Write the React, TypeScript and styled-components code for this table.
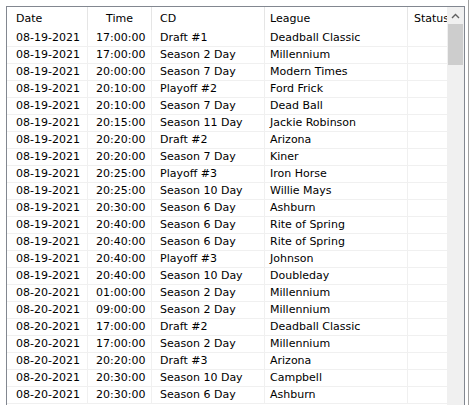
import styled, { createGlobalStyle } from "styled-components";

const GlobalStyle = createGlobalStyle`
  html, body {
    margin: 0;
    padding: 0;
    background: #ffffff;
    overflow: hidden;
  }
`;

type Row = [string, string, string, string];

const rows: Row[] = [
  ["08-19-2021", "17:00:00", "Draft #1", "Deadball Classic"],
  ["08-19-2021", "17:00:00", "Season 2 Day", "Millennium"],
  ["08-19-2021", "20:00:00", "Season 7 Day", "Modern Times"],
  ["08-19-2021", "20:10:00", "Playoff #2", "Ford Frick"],
  ["08-19-2021", "20:10:00", "Season 7 Day", "Dead Ball"],
  ["08-19-2021", "20:15:00", "Season 11 Day", "Jackie Robinson"],
  ["08-19-2021", "20:20:00", "Draft #2", "Arizona"],
  ["08-19-2021", "20:20:00", "Season 7 Day", "Kiner"],
  ["08-19-2021", "20:25:00", "Playoff #3", "Iron Horse"],
  ["08-19-2021", "20:25:00", "Season 10 Day", "Willie Mays"],
  ["08-19-2021", "20:30:00", "Season 6 Day", "Ashburn"],
  ["08-19-2021", "20:40:00", "Season 6 Day", "Rite of Spring"],
  ["08-19-2021", "20:40:00", "Season 6 Day", "Rite of Spring"],
  ["08-19-2021", "20:40:00", "Playoff #3", "Johnson"],
  ["08-19-2021", "20:40:00", "Season 10 Day", "Doubleday"],
  ["08-20-2021", "01:00:00", "Season 2 Day", "Millennium"],
  ["08-20-2021", "09:00:00", "Season 2 Day", "Millennium"],
  ["08-20-2021", "17:00:00", "Draft #2", "Deadball Classic"],
  ["08-20-2021", "17:00:00", "Season 2 Day", "Millennium"],
  ["08-20-2021", "20:20:00", "Draft #3", "Arizona"],
  ["08-20-2021", "20:30:00", "Season 10 Day", "Campbell"],
  ["08-20-2021", "20:30:00", "Season 6 Day", "Ashburn"],
];

// column widths and left padding, last one (Status) gets clipped
const columns = [
  { title: "Date", width: 81, pad: 9, center: false },
  { title: "Time", width: 64, pad: 8, center: true },
  { title: "CD", width: 113, pad: 8, center: false },
  { title: "League", width: 143, pad: 5, center: false },
  { title: "Status", width: 60, pad: 6, center: false },
];

const Frame = styled.div`
  width: 469px;
  height: 405px;
  padding: 6px 4px 0 6px;
  box-sizing: border-box;
  border-right: 1px solid #a0a0a0;
  overflow: hidden;
`;

const ListBox = styled.div`
  display: flex;
  width: 459px;
  height: 420px;
  border: 1px solid #828790;
  box-sizing: border-box;
  background: #ffffff;
  font-family: "DejaVu Sans", Verdana, sans-serif;
  font-size: 11px;
  color: #000000;
`;

const Viewport = styled.div`
  flex: 1;
  overflow: hidden;
`;

const Grid = styled.div`
  display: grid;
  grid-template-columns: ${columns.map((c) => `${c.width}px`).join(" ")};
  width: max-content;
`;

const HeaderCell = styled.div<{ $pad: number; $center: boolean }>`
  height: 23px;
  line-height: 23px;
  padding-left: ${({ $center, $pad }) => ($center ? 0 : $pad)}px;
  text-align: ${({ $center }) => ($center ? "center" : "left")};
  border-right: 1px solid #e5e5e5;
  white-space: nowrap;
  overflow: hidden;
`;

const Cell = styled.div<{ $pad: number }>`
  height: 16px;
  line-height: 16px;
  padding-left: ${({ $pad }) => $pad}px;
  border-right: 1px solid #f0f0f0;
  border-bottom: 1px solid #f0f0f0;
  white-space: nowrap;
  overflow: hidden;
`;

const ScrollBar = styled.div`
  width: 17px;
  display: flex;
  flex-direction: column;
  background: #f0f0f0;
  flex-shrink: 0;
`;

const ArrowButton = styled.div`
  height: 17px;
  display: flex;
  align-items: center;
  justify-content: center;
`;

const Thumb = styled.div`
  height: 41px;
  margin: 0 1px;
  background: #cdcdcd;
`;

export default function App() {
  return (
    <>
      <GlobalStyle />
      <Frame>
        <ListBox>
          <Viewport>
            <Grid>
              {columns.map((c) => (
                <HeaderCell key={c.title} $pad={c.pad} $center={c.center}>
                  {c.title}
                </HeaderCell>
              ))}
              {rows.map((r, i) =>
                [...r, ""].map((v, j) => (
                  <Cell key={`${i}-${j}`} $pad={columns[j].pad}>
                    {v}
                  </Cell>
                ))
              )}
            </Grid>
          </Viewport>
          <ScrollBar>
            <ArrowButton>
              <svg width="9" height="6" viewBox="0 0 9 6">
                <path d="M1 5 L4.5 1.5 L8 5" fill="none" stroke="#606060" strokeWidth="1.4" />
              </svg>
            </ArrowButton>
            <Thumb />
          </ScrollBar>
        </ListBox>
      </Frame>
    </>
  );
}
